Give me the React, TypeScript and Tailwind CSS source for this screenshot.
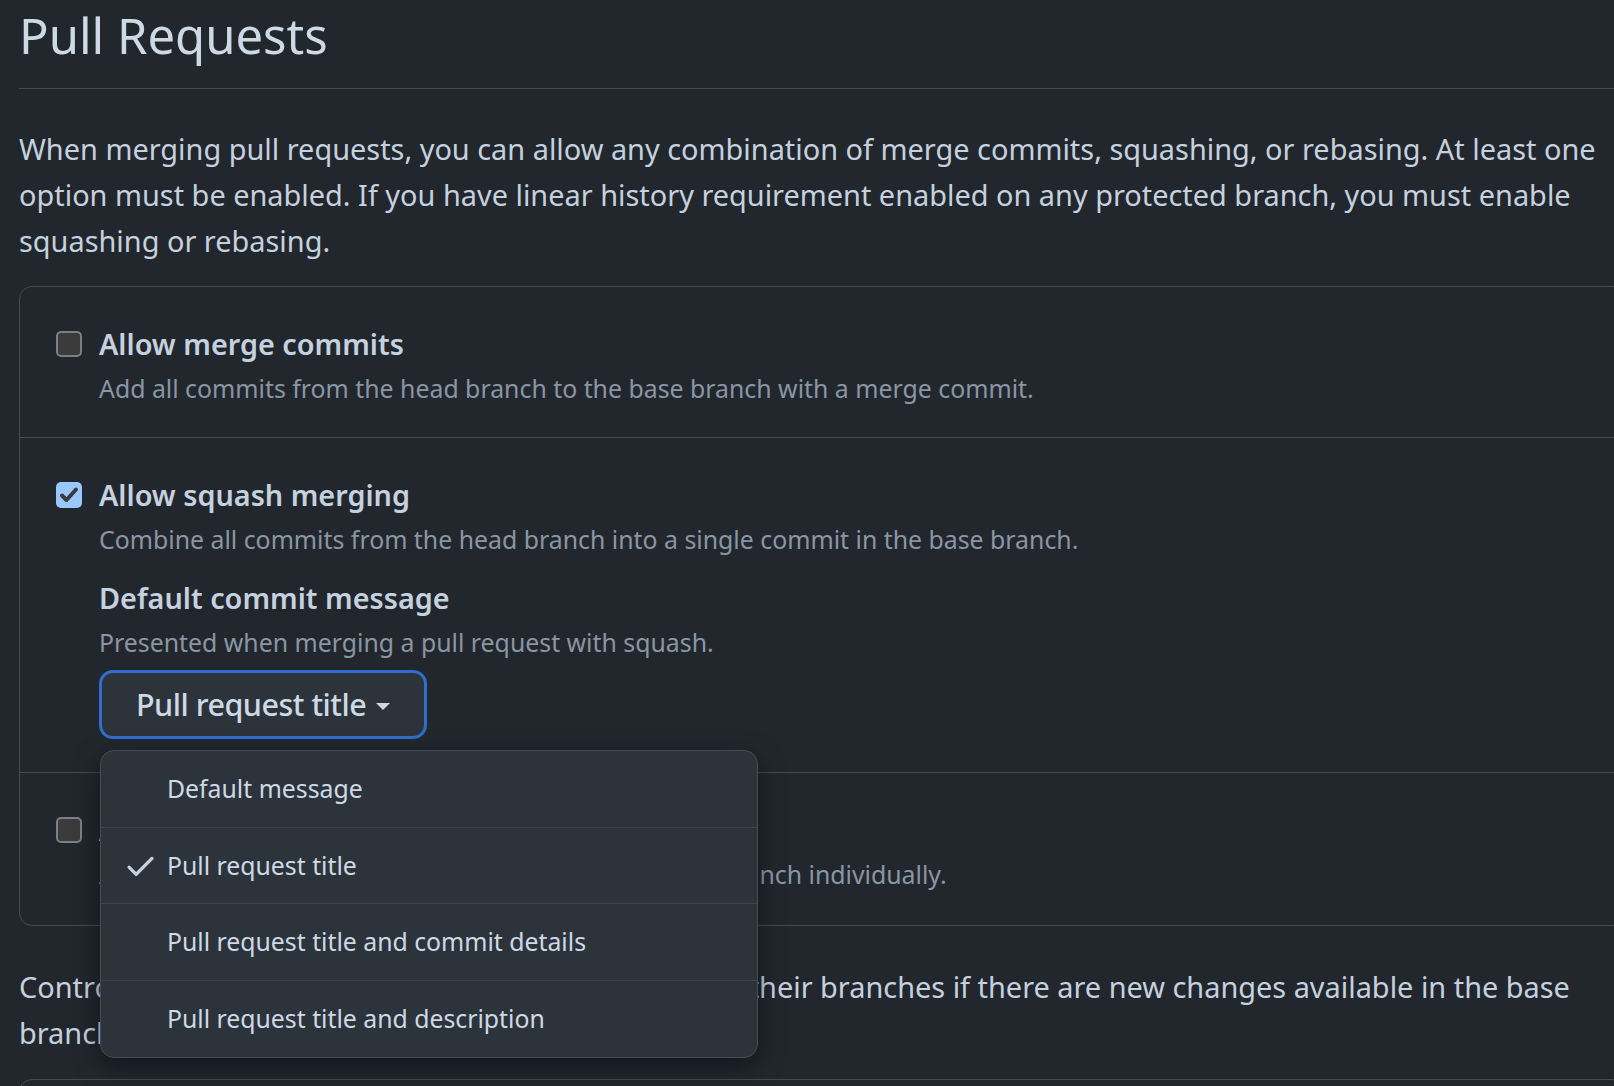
import React from 'react';

const options = [
  'Default message',
  'Pull request title',
  'Pull request title and commit details',
  'Pull request title and description',
];

function Checkbox({ checked }: { checked?: boolean }) {
  if (checked) {
    return (
      <span className="flex h-[26px] w-[26px] shrink-0 items-center justify-center rounded-[5px] bg-[#99c8ff]">
        <svg width="20" height="18" viewBox="0 0 20 18" fill="none">
          <path d="M3 9.5 L7.5 14 L17 3.5" stroke="#3b3b3b" strokeWidth="4" strokeLinecap="round" strokeLinejoin="round" />
        </svg>
      </span>
    );
  }
  return <span className="h-[26px] w-[26px] shrink-0 rounded-[5px] border-2 border-[#7c7f84] bg-[#3b3b3b]" />;
}

function OptionRow({
  label,
  desc,
  checked,
  className,
  children,
}: {
  label: string;
  desc: string;
  checked?: boolean;
  className?: string;
  children?: React.ReactNode;
}) {
  return (
    <div className={`pl-[36px] ${className ?? ''}`}>
      <div className="flex h-[46px] items-center gap-[17px]">
        <Checkbox checked={checked} />
        <span className="text-[28.8px] font-semibold leading-[46px] text-[#c5d1de]">{label}</span>
      </div>
      <div className="pl-[43px]">
        <p className="text-[24.85px] leading-[42px] text-[#8b96a3]">{desc}</p>
        {children}
      </div>
    </div>
  );
}

function CheckIcon() {
  return (
    <svg width="35" height="35" viewBox="0 0 16 16" fill="#c5d1de">
      <path d="M13.78 4.22a.75.75 0 0 1 0 1.06l-7.25 7.25a.75.75 0 0 1-1.06 0L2.22 9.28a.751.751 0 0 1 .018-1.042.751.751 0 0 1 1.042-.018L6 10.94l6.72-6.72a.75.75 0 0 1 1.06 0Z" />
    </svg>
  );
}

export default function App() {
  return (
    <div className="h-screen w-full overflow-hidden bg-[#22272e] font-['Noto_Sans',sans-serif] text-[#c5d1de]">
      <div className="w-[1625px] pl-[19px]">
        <div className="border-b border-[#444c56] pt-[5px] pb-[23px]">
          <h2 className="text-[49px] font-normal leading-[60px] text-[#cdd9e5]">Pull Requests</h2>
        </div>

        <p className="mt-[37px] text-[28.9px] leading-[46px]">
          When merging pull requests, you can allow any combination of merge commits, squashing, or rebasing. At least one
          option must be enabled. If you have linear history requirement enabled on any protected branch, you must enable
          squashing or rebasing.
        </p>

        <div className="mt-[22px] rounded-[13px] border border-[#444c56]">
          <OptionRow
            className="border-b border-[#444c56] pt-[34px] pb-[28px]"
            label="Allow merge commits"
            desc="Add all commits from the head branch to the base branch with a merge commit."
          />
          <OptionRow
            checked
            className="border-b border-[#444c56] pt-[34px] pb-[33px]"
            label="Allow squash merging"
            desc="Combine all commits from the head branch into a single commit in the base branch."
          >
            <h3 className="mt-[15px] text-[28.8px] font-semibold leading-[46px] text-[#c5d1de]">Default commit message</h3>
            <p className="text-[24.85px] leading-[42px] text-[#8b96a3]">Presented when merging a pull request with squash.</p>
            <div className="relative mt-[7px]">
              <button className="flex h-[69px] items-center gap-[10px] rounded-[14px] border-[3px] border-[#316dca] bg-[#2d333b] pl-[34px] pr-[34px] text-[30.5px] font-medium tracking-[-0.5px] text-[#cdd9e5]">
                Pull request title
                <span className="mt-[4px] h-0 w-0 border-x-[7px] border-t-[7px] border-x-transparent border-t-[#cdd9e5]" />
              </button>
              <div className="absolute left-[1px] top-[80px] z-10 w-[658px] overflow-hidden rounded-[14px] border border-[#444c56] bg-[#2d333b] shadow-[0_8px_24px_rgba(1,4,9,0.5)]">
                {options.map((opt, i) => (
                  <div
                    key={opt}
                    className={`flex h-[76.5px] items-center ${i < options.length - 1 ? 'border-b border-[#3d444d]' : ''}`}
                  >
                    <span className="flex w-[66px] justify-end pr-[9px]">{i === 1 ? <CheckIcon /> : null}</span>
                    <span className="text-[24.8px] text-[#cdd9e5]">{opt}</span>
                  </div>
                ))}
              </div>
            </div>
          </OptionRow>
          <OptionRow
            className="pt-[34px] pb-[30px]"
            label="Allow rebase merging"
            desc="Add all commits from the head branch onto the base branch individually."
          />
        </div>

        <p className="mt-[38px] text-[28.9px] leading-[46px]">
          Control how and when users are prompted to update their branches if there are new changes available in the base
          branch.
        </p>

        <div className="mt-[23px] h-[120px] rounded-t-[13px] border border-[#444c56]" />
      </div>
    </div>
  );
}
